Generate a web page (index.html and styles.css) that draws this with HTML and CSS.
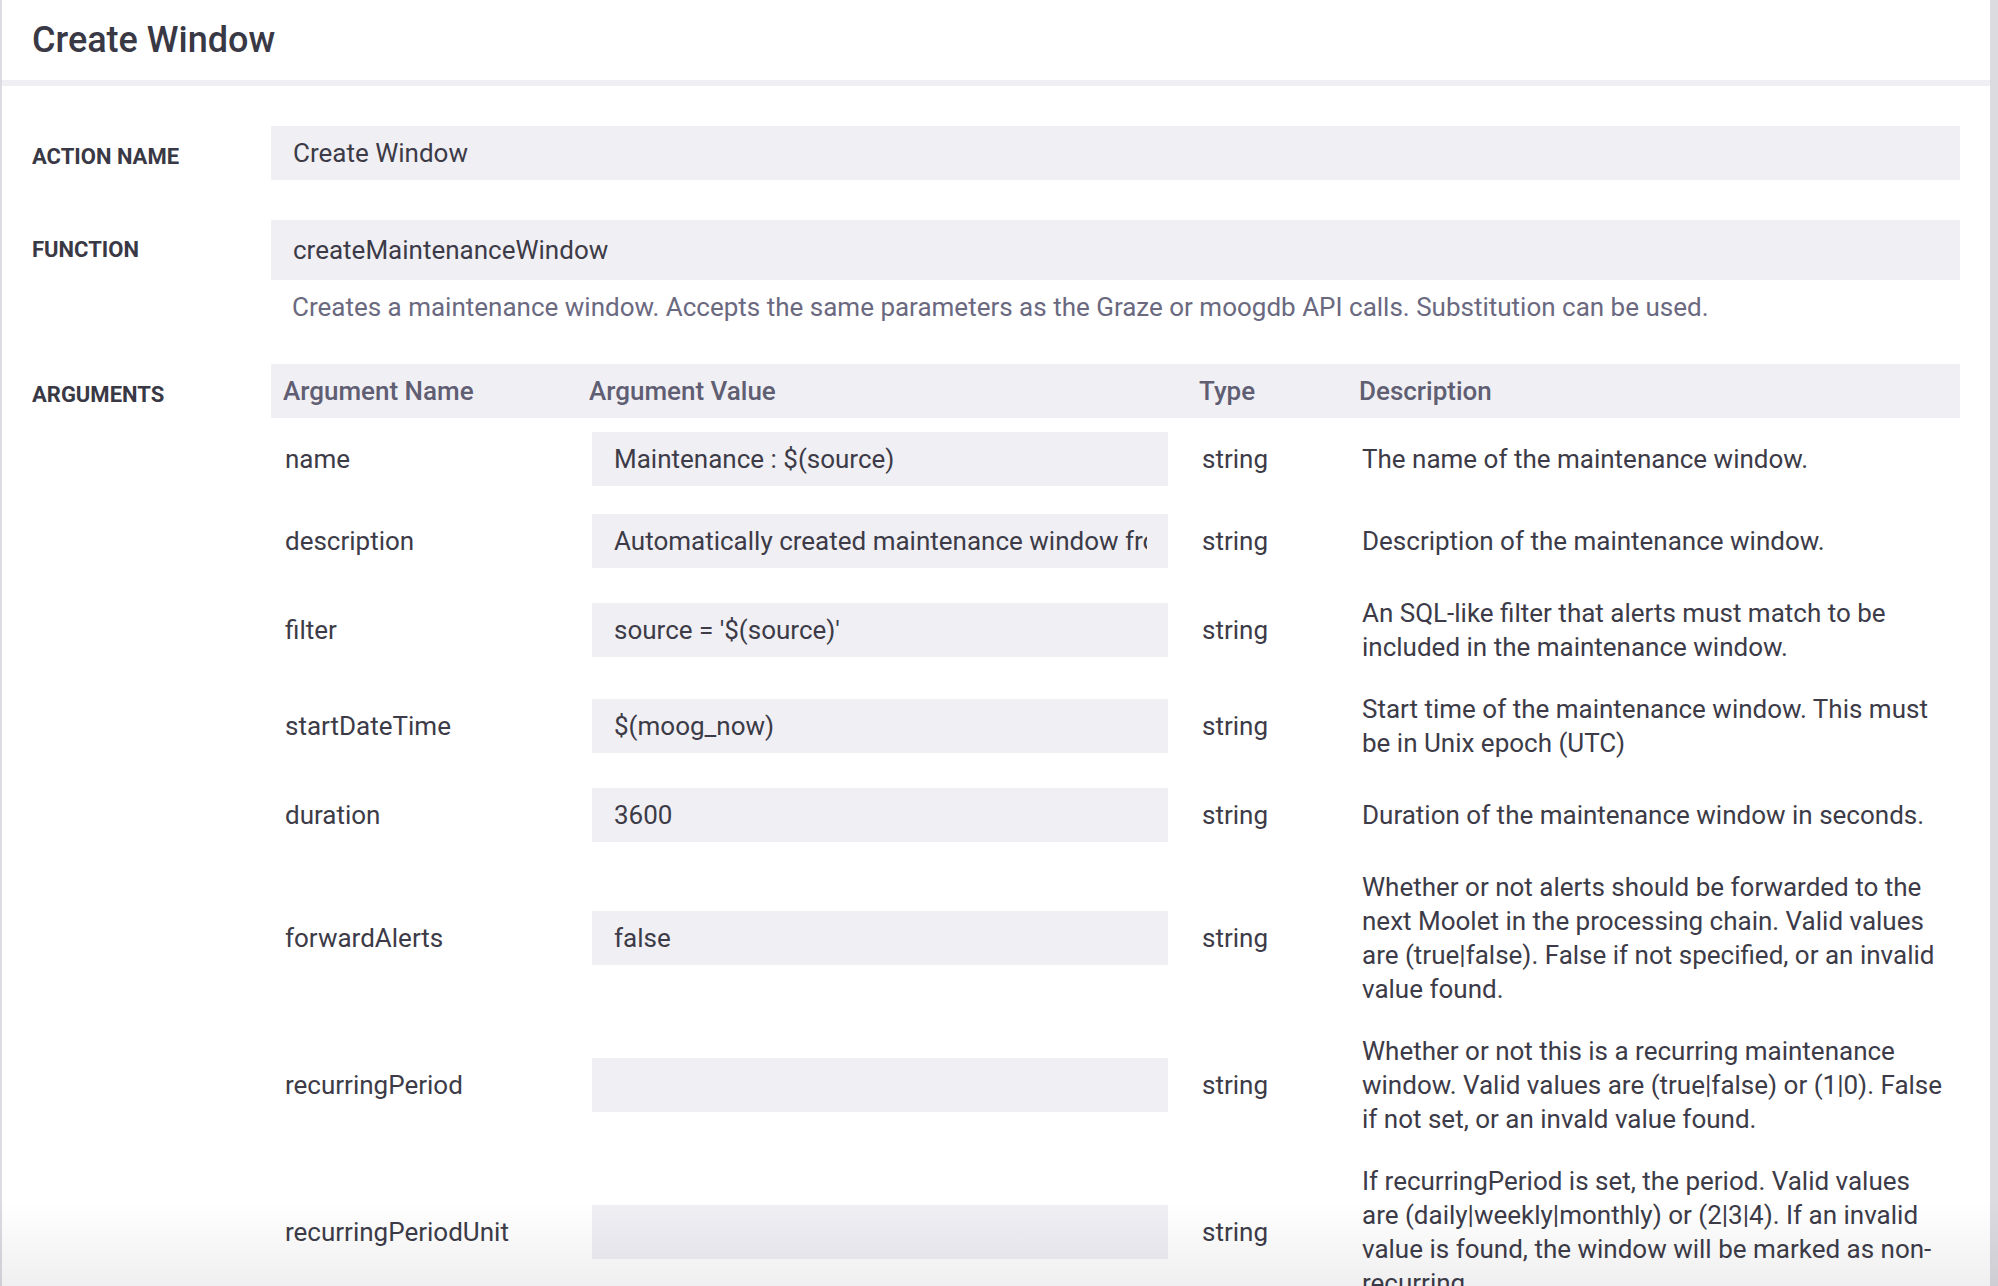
FILE: index.html
```html
<!DOCTYPE html>
<html lang="en">
<head>
<meta charset="utf-8">
<title>Create Window</title>
<link rel="stylesheet" href="styles.css">
</head>
<body>
<div class="page">
  <main class="panel">
    <header class="panel-head">
      <h1 class="panel-title">Create Window</h1>
    </header>
    <div class="divider"></div>
    <div class="form">
      <div class="field">
        <label class="label label-low" for="action-name">ACTION NAME</label>
        <input class="input input-action" id="action-name" type="text" readonly value="Create Window">
      </div>
      <div class="field field-function">
        <label class="label" for="function-name">FUNCTION</label>
        <input class="input input-function" id="function-name" type="text" readonly value="createMaintenanceWindow">
      </div>
      <div class="field field-help">
        <div class="label-spacer"></div>
        <p class="help">Creates a maintenance window. Accepts the same parameters as the Graze or moogdb API calls. Substitution can be used.</p>
      </div>
      <div class="field field-args">
        <div class="label label-args">ARGUMENTS</div>
        <div class="args-table">
          <div class="args-row args-head">
            <div class="th">Argument Name</div>
            <div class="th">Argument Value</div>
            <div class="th">Type</div>
            <div class="th">Description</div>
          </div>
          <div class="args-row">
            <div class="td td-name">name</div>
            <div class="td td-value"><input class="input input-arg" type="text" readonly value="Maintenance : $(source)"></div>
            <div class="td td-type">string</div>
            <div class="td td-desc">The name of the maintenance window.</div>
          </div>
          <div class="args-row">
            <div class="td td-name">description</div>
            <div class="td td-value"><input class="input input-arg" type="text" readonly value="Automatically created maintenance window from $(source)"></div>
            <div class="td td-type">string</div>
            <div class="td td-desc">Description of the maintenance window.</div>
          </div>
          <div class="args-row">
            <div class="td td-name">filter</div>
            <div class="td td-value"><input class="input input-arg" type="text" readonly value="source = '$(source)'"></div>
            <div class="td td-type">string</div>
            <div class="td td-desc">An SQL-like filter that alerts must match to be included in the maintenance window.</div>
          </div>
          <div class="args-row">
            <div class="td td-name">startDateTime</div>
            <div class="td td-value"><input class="input input-arg" type="text" readonly value="$(moog_now)"></div>
            <div class="td td-type">string</div>
            <div class="td td-desc">Start time of the maintenance window. This must be in Unix epoch (UTC)</div>
          </div>
          <div class="args-row">
            <div class="td td-name">duration</div>
            <div class="td td-value"><input class="input input-arg" type="text" readonly value="3600"></div>
            <div class="td td-type">string</div>
            <div class="td td-desc">Duration of the maintenance window in seconds.</div>
          </div>
          <div class="args-row">
            <div class="td td-name">forwardAlerts</div>
            <div class="td td-value"><input class="input input-arg" type="text" readonly value="false"></div>
            <div class="td td-type">string</div>
            <div class="td td-desc">Whether or not alerts should be forwarded to the next Moolet in the processing chain. Valid values are (true|false). False if not specified, or an invalid value found.</div>
          </div>
          <div class="args-row">
            <div class="td td-name">recurringPeriod</div>
            <div class="td td-value"><input class="input input-arg" type="text" readonly value=""></div>
            <div class="td td-type">string</div>
            <div class="td td-desc">Whether or not this is a recurring maintenance window. Valid values are (true|false) or (1|0). False if not set, or an invald value found.</div>
          </div>
          <div class="args-row">
            <div class="td td-name">recurringPeriodUnit</div>
            <div class="td td-value"><input class="input input-arg" type="text" readonly value=""></div>
            <div class="td td-type">string</div>
            <div class="td td-desc">If recurringPeriod is set, the period. Valid values are (daily|weekly|monthly) or (2|3|4). If an invalid value is found, the window will be marked as non-recurring.</div>
          </div>
        </div>
      </div>
    </div>
  </main>
  <div class="scroll-strip"></div>
</div>
<div class="bottom-fade"></div>
</body>
</html>
```

FILE: styles.css
```css
html, body {
  margin: 0;
  padding: 0;
  height: 1286px;
  overflow: hidden;
  background: #ffffff;
}

body {
  font-family: Roboto, "Liberation Sans", sans-serif;
  color: #3c3b47;
}

.page {
  display: flex;
  min-height: 1286px;
}

.panel {
  flex: 1;
  border-left: 2px solid #dcdbe1;
  background: #ffffff;
}

.scroll-strip {
  width: 8px;
  flex: none;
  background: #dcdbe0;
}

.panel-head {
  height: 80px;
  display: flex;
  align-items: center;
  padding-left: 30px;
}

.panel-title {
  margin: 0;
  font-size: 36px;
  font-weight: 500;
  line-height: 44px;
  color: #393845;
}

.divider {
  height: 6px;
  background: #f0eff4;
}

.form {
  padding: 40px 30px 0 30px;
}

.field {
  display: grid;
  grid-template-columns: 239px 1fr;
  align-items: center;
}

.field-function {
  margin-top: 40px;
}

.field-help {
  margin-top: 10px;
}

.field-args {
  margin-top: 40px;
  align-items: start;
}

.label {
  font-size: 22px;
  font-weight: 700;
  line-height: 30px;
  color: #393845;
}

.label-low {
  padding-top: 8px;
}

.label-args {
  padding-top: 16px;
}

.input {
  display: block;
  width: 100%;
  margin: 0;
  border: 0;
  outline: none;
  border-radius: 0;
  background: #f0eff4;
  padding: 0 22px;
  font-family: Roboto, "Liberation Sans", sans-serif;
  font-size: 26px;
  font-weight: 400;
  color: #3c3b47;
  box-sizing: border-box;
}

.input-action {
  height: 54px;
}

.input-function {
  height: 60px;
}

.help {
  margin: 0;
  font-size: 26px;
  line-height: 34px;
  color: #6a6980;
  padding-left: 21px;
}

.args-table {
  display: flex;
  flex-direction: column;
}

.args-row {
  display: grid;
  grid-template-columns: 306px 610px 160px 1fr;
  align-items: center;
}

.args-head {
  height: 54px;
  background: #f0eff4;
}

.th {
  padding-left: 12px;
  font-size: 26px;
  font-weight: 500;
  color: #5f5e72;
  line-height: 34px;
}

.args-row:not(.args-head) {
  padding: 14px 0;
}

.td {
  padding-left: 15px;
  font-size: 26px;
  line-height: 34px;
  color: #3c3b47;
}

.td-name {
  padding-left: 14px;
}

.td-value {
  padding-right: 19px;
}

.input-arg {
  height: 54px;
  padding: 0 21px 0 22px;
}

.td-desc {
  padding-right: 13px;
}

.bottom-fade {
  position: fixed;
  left: 0;
  right: 0;
  bottom: 0;
  height: 84px;
  background: linear-gradient(to bottom, rgba(40, 40, 60, 0), rgba(40, 40, 60, 0.075));
  pointer-events: none;
}
```
